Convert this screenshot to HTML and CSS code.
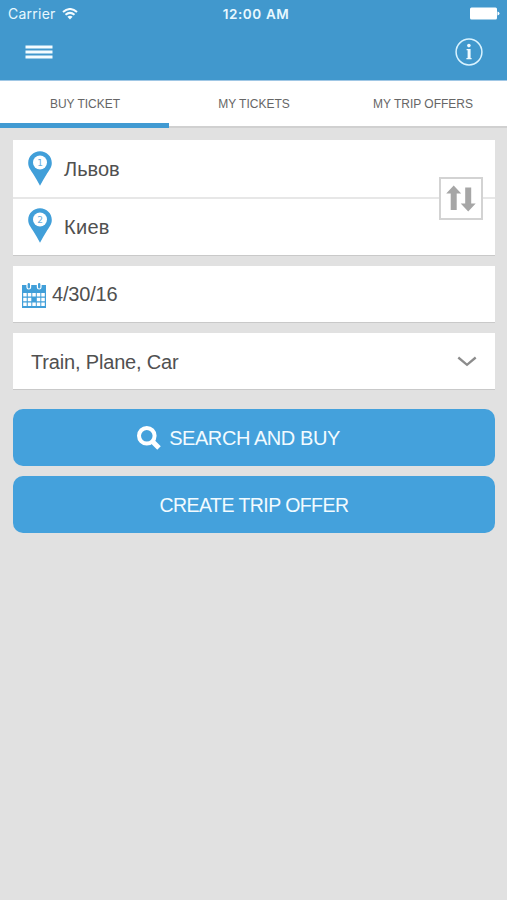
FILE: index.html
```html
<!DOCTYPE html>
<html lang="en">
<head>
<meta charset="utf-8">
<meta name="viewport" content="width=device-width">
<title>Buy ticket</title>
<link rel="stylesheet" href="styles.css">
</head>
<body>
<header class="header">
  <div class="status">
    <div class="carrier"><span>Carrier</span>
      <svg width="16" height="12" viewBox="0 0 16 12" fill="none" stroke="#f4fcff" stroke-width="2"><path d="M1 4.1Q8-2.1 15 4.1M3.5 6.8Q8 2.9 12.5 6.8"/><path d="M5.4 8.7Q8 6.6 10.6 8.7L8 11.4Z" fill="#f4fcff" stroke="none"/></svg>
    </div>
    <div class="clock">12:00 AM</div>
    <svg class="battery" width="31" height="13" viewBox="0 0 31 13" fill="#fff"><rect x="1" y=".5" width="27" height="12" rx="1.5"/><path d="M28.5 4.500q2 .3 2 2t-2 2z"/></svg>
  </div>
  <div class="navbar">
    <svg width="28" height="14" viewBox="0 0 28 14" fill="#f4fcff"><path d="M.5.5h27v3H.5zM.5 5.5h27v3H.5zM.5 10.5h27v3H.5z"/></svg>
    <svg width="28" height="28" viewBox="0 0 28 28"><circle cx="14" cy="14" r="12.9" fill="none" stroke="#d9f3ff" stroke-width="1.5"/><g fill="#effaff"><circle cx="13.9" cy="7.6" r="1.8"/><path d="M11.6 11h4v9h1v1.3h-5.2V20h1.2v-7.7h-1z"/></g></svg>
  </div>
</header>
<nav class="tabs">
  <div class="tab active"><span>BUY TICKET</span></div>
  <div class="tab"><span>MY TICKETS</span></div>
  <div class="tab"><span>MY TRIP OFFERS</span></div>
</nav>
<main class="content">
  <section class="card route">
    <div class="stop">
      <svg class="pin" width="24" height="35" viewBox="0 0 24 35"><path d="M12 .3C5.4.3.2 5.4.2 12c0 4.600 3 7.600 5.300 11.500Q9 29 12 34.800Q15 29 18.500 23.500C20.800 19.600 23.800 16.600 23.800 12 23.800 5.400 18.600.3 12 .3z" fill="#419fd9"/><circle cx="12" cy="11.500" r="7" fill="#fff"/><text x="12" y="14.500" class="pin-number">1</text></svg>
      <span class="city">Львов</span>
    </div>
    <div class="stop">
      <svg class="pin" width="24" height="35" viewBox="0 0 24 35"><path d="M12 .3C5.4.3.2 5.4.2 12c0 4.600 3 7.600 5.300 11.500Q9 29 12 34.800Q15 29 18.500 23.500C20.800 19.600 23.800 16.600 23.800 12 23.800 5.400 18.600.3 12 .3z" fill="#419fd9"/><circle cx="12" cy="11.500" r="7" fill="#fff"/><text x="12" y="14.500" class="pin-number">2</text></svg>
      <span class="city kiev">Киев</span>
    </div>
    <div class="swap">
      <svg width="30" height="27" viewBox="0 0 30 27" fill="#a6a6a6"><path d="M7.700.5 15.200 8.500h-4.500V25H4.700V8.500H.2zM19.200 2.500h6v16h4.500L22.200 26.500 14.700 18.500h4.500z"/></svg>
    </div>
  </section>
  <section class="card date">
    <svg width="24" height="25" viewBox="0 0 24 25"><path fill="#419fd9" d="M0 2h24v23H0z"/><g fill="#419fd9" stroke="#fff" stroke-width="1.200"><rect x="5" y="-.5" width="3.600" height="6.500" rx="1.800"/><rect x="15.400" y="-.5" width="3.600" height="6.500" rx="1.800"/></g><path fill="#fff" d="M1.200 10h3.500v3.500H1.200zm4.600 0h3.500v3.500H5.800zm4.500 0h3.500v3.500h-3.500zm4.500 0h3.500v3.500h-3.500zm4.500 0h3.500v3.500h-3.500zM1.200 14.800h3.500v3.500H1.200zm4.600 0h3.500v3.500H5.800zm9 0h3.500v3.500h-3.500zm4.500 0h3.500v3.500h-3.500zM1.200 19.600h3.500v3.500H1.200zm4.600 0h3.500v3.500H5.800zm4.500 0h3.500v3.500h-3.500zm4.500 0h3.500v3.500h-3.500zm4.500 0h3.500v3.500h-3.500z"/></svg>
    <span class="date-text">4/30/16</span>
  </section>
  <section class="card mode">
    <span class="mode-text">Train, Plane, Car</span>
    <svg width="20" height="12" viewBox="0 0 20 12" fill="none" stroke="#8c8c8c" stroke-width="2.300"><path d="M1.300 2.500 10 9.800 18.700 2.500"/></svg>
  </section>
  <div class="button search">
    <svg width="24" height="24" viewBox="0 0 24 24" fill="none" stroke="#fff"><circle cx="9.800" cy="9.800" r="7.800" stroke-width="4"/><path d="M15.500 15.500 22 22" stroke-width="5"/></svg>
    <span class="search-text">SEARCH AND BUY</span>
  </div>
  <div class="button create"><span class="create-text">CREATE TRIP OFFER</span></div>
</main>
</body>
</html>
```
FILE: styles.css
```css
* { box-sizing: border-box; }
body { margin: 0; height: 900px; overflow: hidden; background: #e1e1e1; color: #505050; font-family: "Liberation Sans", Arial, sans-serif; }
svg { display: block; flex: none; }
span { white-space: nowrap; }
.header { height: 80px; background: #4198cd; }
.status { height: 27px; display: grid; grid-template-columns: 1fr auto 1fr; align-items: center; padding: 0 7px 0 8px; font-family: Inter, sans-serif; color: #e8f8ff; }
.carrier { display: flex; align-items: center; gap: 6px; font-size: 14px; letter-spacing: .25px; }
.clock { font-size: 13.5px; font-weight: 600; letter-spacing: .6px; padding-left: 4px; }
.battery { justify-self: end; }
.navbar { display: flex; justify-content: space-between; align-items: center; height: 50px; padding: 0 24px 0 25px; }
.tabs { display: flex; height: 48px; background: #fff; border-top: 1px solid #a0c7e5; border-bottom: 2px solid #d0d0d0; }
.tab { flex: 1; height: 47px; padding: 0 0 1px 1px; display: flex; align-items: center; justify-content: center; font-size: 12px; color: #666; }
.active { border-bottom: 5px solid #419ad2; padding: 4px 0 0 1px; }
.content { display: flex; flex-direction: column; padding: 12px 12px 0 13px; }
.card { height: 57px; background: #fff; border-bottom: 1px solid #c9c9c9; margin-bottom: 10px; display: flex; align-items: center; font-size: 20px; }
.route { height: 116px; display: block; position: relative; }
.stop { height: 58px; display: flex; align-items: center; padding-left: 15px; gap: 12px; }
.stop + .stop { border-top: 2px solid #e7e7e7; height: 57px; margin-top: -1px; }
.pin { margin-bottom: 2px; }
.kiev { letter-spacing: .3px; padding-top: 2px; }
.pin-number { font: 9px "DejaVu Sans", sans-serif; fill: #68aedc; text-anchor: middle; }
.swap { position: absolute; right: 12px; top: 37px; width: 44px; height: 43px; border: 2px solid #d3d3d3; background: #fff; display: flex; align-items: center; justify-content: center; }
.date { padding-left: 9px; gap: 6px; }
.date svg { margin-top: 3px; }
.date-text { letter-spacing: -.2px; padding-top: 1px; }
.mode { padding: 0 18px; justify-content: space-between; margin-bottom: 19px; }
.mode-text { letter-spacing: -.17px; padding-top: 2px; }
.button { height: 57px; border-radius: 10px; background: #44a1dc; color: #f2fbff; display: flex; align-items: center; justify-content: center; font-size: 20px; margin-bottom: 10px; }
.search { gap: 8px; padding-right: 31px; }
.search-text { letter-spacing: -.43px; padding-top: 2px; }
.create-text { font-size: 19.5px; letter-spacing: -.55px; padding-top: 2px; }
```
